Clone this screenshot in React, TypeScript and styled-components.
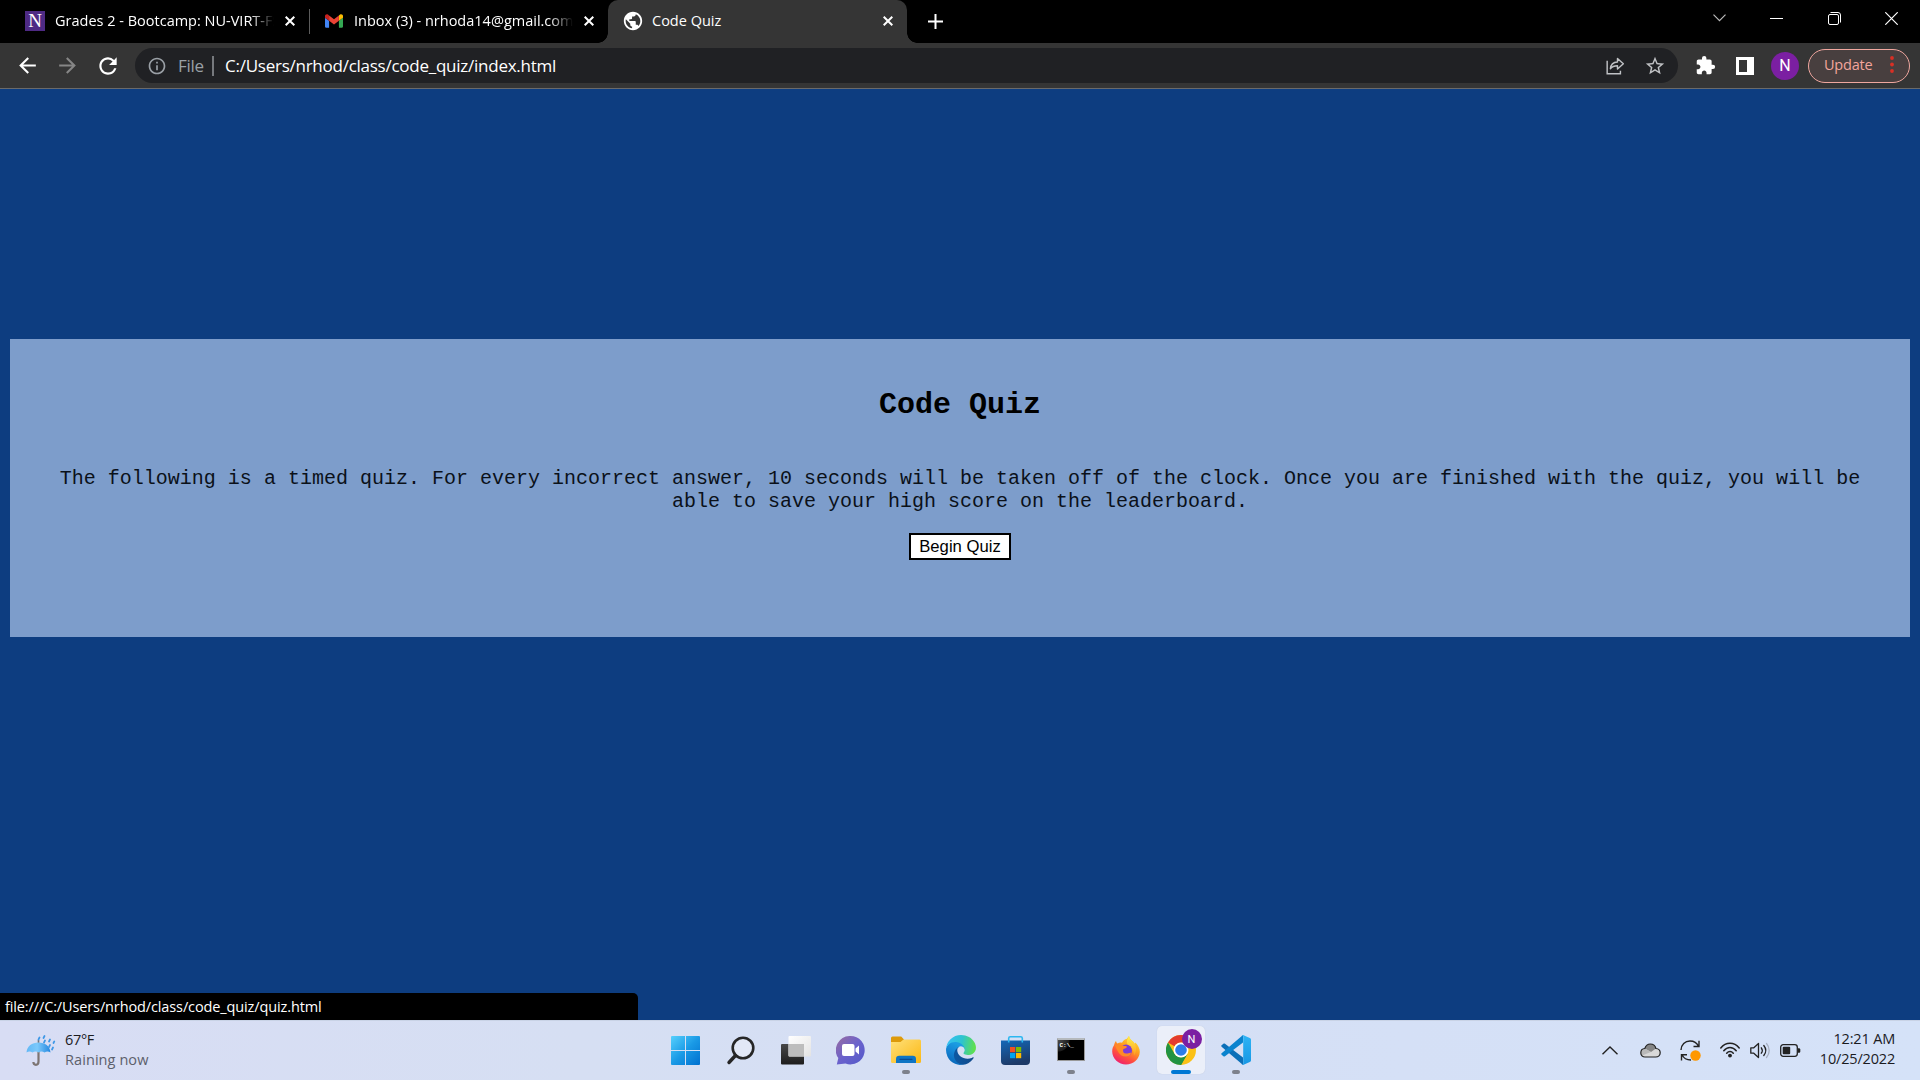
import React from "react";
import styled, { createGlobalStyle, css } from "styled-components";
import { MdArrowBack, MdArrowForward, MdRefresh, MdInfoOutline, MdStarOutline, MdExtension, MdPublic } from "react-icons/md";

const GlobalStyle = createGlobalStyle`
  * { box-sizing: border-box; }
  html, body { margin: 0; padding: 0; overflow: hidden; }
  body { font-family: "Open Sans", "Noto Sans", sans-serif; }
  svg { display: block; flex: none; }
`;

const Screen = styled.div`
  width: 1920px;
  height: 1080px;
  display: flex;
  flex-direction: column;
  background: #0d3d80;
`;

/* ---------- tab strip ---------- */
const TabStrip = styled.header`
  height: 43px;
  flex: none;
  display: flex;
  background: #000;
  color: #fff;
`;

const Tab = styled.div<{ $width: number; $active?: boolean; $left: number }>`
  position: relative;
  width: ${(p) => p.$width}px;
  height: 43px;
  flex: none;
  display: flex;
  align-items: center;
  padding: 0 14px 1px ${(p) => p.$left}px;
  ${(p) =>
    p.$active &&
    css`
      background: #353535;
      border-radius: 10px 10px 0 0;
      &::before,
      &::after {
        content: "";
        position: absolute;
        bottom: 0;
        width: 10px;
        height: 10px;
      }
      &::before {
        left: -10px;
        background: radial-gradient(circle at 0 0, transparent 9.5px, #353535 10px);
      }
      &::after {
        right: -10px;
        background: radial-gradient(circle at 100% 0, transparent 9.5px, #353535 10px);
      }
    `}
`;

const TabTitle = styled.span<{ $gap: number; $fade?: boolean }>`
  flex: 1;
  margin: 0 11px 0 ${(p) => p.$gap}px;
  overflow: hidden;
  white-space: nowrap;
  font-size: 14.5px;
  line-height: 20px;
  ${(p) => p.$fade && css`mask-image: linear-gradient(to right, #000 calc(100% - 24px), transparent);`}
`;

const TabDivider = styled.i`
  width: 1px;
  height: 25px;
  margin-top: 9px;
  flex: none;
  background: #5c5c5c;
`;

const NewTab = styled.div`
  width: 56px;
  display: flex;
  align-items: center;
  justify-content: center;
  padding-bottom: 1px;
`;

const WindowControls = styled.div`
  margin-left: auto;
  display: flex;
  height: 36px;
`;

const WindowControl = styled.div`
  width: 57.3px;
  display: flex;
  align-items: center;
  justify-content: center;
`;

/* ---------- toolbar ---------- */
const Toolbar = styled.nav`
  height: 46px;
  flex: none;
  display: flex;
  align-items: center;
  background: #353535;
  border-bottom: 1px solid #6a6a6a;
  color: #fff;
`;

const NavButton = styled.span<{ $dim?: boolean }>`
  width: 40.5px;
  display: flex;
  justify-content: center;
  color: ${(p) => (p.$dim ? "#868686" : "#fff")};
`;

const NavGroup = styled.div`
  width: 135px;
  padding-left: 7px;
  display: flex;
`;

const AddressBar = styled.div`
  width: 1543px;
  height: 35px;
  border-radius: 18px;
  background: #202124;
  display: flex;
  align-items: center;
  padding: 0 12px 0 12px;
  color: #9aa0a6;
`;

const Scheme = styled.span`
  margin-left: 11px;
  width: 34px;
  font-size: 17px;
  line-height: 22px;
  letter-spacing: -0.3px;
  color: #9aa0a6;
`;

const SchemeDivider = styled.i`
  width: 2px;
  height: 20px;
  background: #76797d;
`;

const Url = styled.span`
  margin-left: 11px;
  flex: 1;
  font-size: 17px;
  line-height: 22px;
  letter-spacing: -0.25px;
  color: #fff;
`;

const AddressActions = styled.div`
  display: flex;
  align-items: center;
  gap: 19px;
  color: #c0c2c5;
`;

const Extensions = styled.div`
  width: 130px;
  display: flex;
  align-items: center;
  padding-left: 17px;
`;

const SidePanelIcon = styled.i`
  width: 18px;
  height: 18px;
  margin-left: 20px;
  border: 3px solid #fff;
  border-right-width: 7px;
`;

const Avatar = styled.span<{ $size: number; $fontSize: number }>`
  width: ${(p) => p.$size}px;
  height: ${(p) => p.$size}px;
  border-radius: 50%;
  flex: none;
  display: flex;
  align-items: center;
  justify-content: center;
  background: #7b1fa2;
  color: #fff;
  font-family: Roboto, sans-serif;
  font-size: ${(p) => p.$fontSize}px;
  line-height: 1;
`;

const ProfileSlot = styled.div`
  margin-left: 17px;
`;

const UpdateButton = styled.button`
  width: 102px;
  height: 34px;
  padding: 0 15px 2px;
  display: flex;
  align-items: center;
  justify-content: space-between;
  border: 1px solid #f0a79f;
  border-radius: 17px;
  background: #483f3f;
  color: #f3a59c;
  font-family: inherit;
  font-size: 14.5px;
  letter-spacing: -0.2px;
`;

/* ---------- page ---------- */
const Page = styled.main`
  flex: 1;
  display: flex;
  flex-direction: column;
  padding: 250px 10px 0;
  font-family: "Liberation Mono", monospace;
  color: #000;
`;

const QuizPanel = styled.section`
  height: 298px;
  flex: none;
  padding: 49px 40px 0;
  display: flex;
  flex-direction: column;
  align-items: center;
  background: #7d9dcb;
  text-align: center;
`;

const QuizTitle = styled.h1`
  margin: 0 0 45px;
  font-size: 30px;
  line-height: 34px;
`;

const QuizText = styled.p`
  margin: 0 0 20px;
  font-size: 20px;
  line-height: 23px;
  color: #0b1119;
`;

const BeginButton = styled.button`
  width: 102px;
  height: 27px;
  padding: 0;
  border: 2px solid #000;
  background: #fff;
  color: #000;
  font: 16.67px "Liberation Sans", sans-serif;
`;

const StatusBubble = styled.div`
  width: 638px;
  height: 27px;
  margin: auto 0 0 -10px;
  padding-left: 5px;
  border-radius: 0 5px 0 0;
  background: #000;
  color: #fff;
  font: 14.5px/27px "Open Sans", "Noto Sans", sans-serif;
  letter-spacing: -0.12px;
`;

/* ---------- taskbar ---------- */
const Taskbar = styled.footer`
  height: 60px;
  flex: none;
  display: flex;
  align-items: center;
  box-shadow: inset 0 1px 0 #c9d3e6;
  background: linear-gradient(90deg, #d8ddf4 0%, #d6dff3 30%, #d5dff5 60%, #d5e2f8 100%);
  color: #1b1b1f;
`;

const Weather = styled.div`
  width: 658px;
  padding-left: 26px;
  display: flex;
  align-items: center;
`;

const Lines = styled.div<{ $align: "left" | "right" }>`
  display: flex;
  flex-direction: column;
  text-align: ${(p) => p.$align};
  font-size: 14.5px;
  line-height: 20px;
`;

const WeatherText = styled(Lines)`
  margin-left: 9px;
`;

const Muted = styled.span`
  color: #5c606b;
  letter-spacing: 0.08px;
`;

const Tight = styled.span`
  letter-spacing: -0.35px;
`;

const Apps = styled.div`
  display: flex;
`;

const AppSlot = styled.div`
  width: 55px;
  display: flex;
  justify-content: center;
`;

const AppTile = styled.div<{ $state?: "open" | "focused" }>`
  position: relative;
  width: 48px;
  height: 48px;
  border-radius: 5px;
  display: flex;
  align-items: center;
  justify-content: center;
  ${(p) => p.$state === "focused" && css`background: #ebeff9; box-shadow: 0 0 1px #b9c3d8;`}
  ${(p) =>
    p.$state &&
    css`
      &::after {
        content: "";
        position: absolute;
        bottom: 0;
        left: 50%;
        width: ${p.$state === "focused" ? 20 : 8}px;
        height: 4px;
        border-radius: 2px;
        transform: translateX(-50%);
        background: ${p.$state === "focused" ? "#0078d4" : "#7d818c"};
      }
    `}
`;

const Badge = styled.div`
  position: absolute;
  top: 3px;
  right: 3px;
`;

const Tray = styled.div`
  flex: 1;
  display: flex;
  align-items: center;
  justify-content: flex-end;
  padding-right: 25px;
`;

const TrayIcon = styled.span<{ $gap: number }>`
  margin-right: ${(p) => p.$gap}px;
`;

const Clock = styled(Lines)`
  width: 80px;
  margin-top: -2px;
`;

const ClockLine = styled.span`
  letter-spacing: -0.18px;
`;

/* ---------- drawings ---------- */
const CloseGlyph = () => (
  <svg width="10" height="10" viewBox="0 0 10 10" stroke="#fff" strokeWidth="2">
    <path d="M.7.7l8.6 8.6M9.3.7L.7 9.3" />
  </svg>
);

const Crest = styled.span`
  width: 20px;
  height: 20px;
  flex: none;
  background: #4e2a84;
  color: #fff;
  font: 19px/20px "Liberation Serif", serif;
  text-align: center;
`;

const GmailLogo = () => (
  <svg width="18" height="14" viewBox="52 42 88 66">
    <path fill="#4285f4" d="M58 108h14V74L52 59v43c0 3.32 2.69 6 6 6" />
    <path fill="#34a853" d="M120 108h14c3.32 0 6-2.69 6-6V59l-20 15" />
    <path fill="#fbbc04" d="M120 48v26l20-15v-8c0-7.42-8.47-11.65-14.4-7.2" />
    <path fill="#ea4335" d="M72 74V48l24 18 24-18v26L96 92" />
    <path fill="#c5221f" d="M52 51v8l20 15V48l-5.6-4.2c-5.94-4.45-14.4-.22-14.4 7.2" />
  </svg>
);

const ShareGlyph = () => (
  <svg width="19" height="18" viewBox="0 0 20 19" fill="none" stroke="currentColor" strokeWidth="1.5">
    <path d="M1.200 4v13.700h14V14.500" />
    <path d="M4.600 12.400c.4-4.600 3-7 7.500-7.200V1.600l6.200 5.600-6.200 5.400V9.300c-3.600 0-5.800.9-7.500 3.100z" strokeLinejoin="round" />
  </svg>
);

const Umbrella = () => (
  <svg width="30" height="31" viewBox="0 0 30 31">
    <defs>
      <linearGradient id="canopy"><stop stopColor="#62b8f6" /><stop offset=".45" stopColor="#7cc9fb" /><stop offset="1" stopColor="#2287e0" /></linearGradient>
    </defs>
    <path d="M12.500 14v12.500c0 2.600-1 3.300-2.600 3.300-1.700 0-2.500-1-2.500-2.800" fill="none" stroke="#7c7472" strokeWidth="2.200" />
    <path d="M12.500 5v4" stroke="#7c7472" strokeWidth="1.600" />
    <path d="M.5 17.500C1 11 6 7.500 12.500 7.500S24 11 24.500 17.500c-2-1.200-4-1.200-6 0-2-1.200-4-1.200-6 0-2-1.200-4-1.200-6 0-2-1.200-4-1.200-6 0z" fill="url(#canopy)" />
    <path d="M12.500 4.500l1-2M17.500 3l1-2M18 7.500l1-2M23 6.500l1-2M23 12l1-2M27.500 8l.8-1.600M26 14.500l1-2" stroke="#3d97e6" strokeWidth="1.700" strokeLinecap="round" />
  </svg>
);

const StartLogo = () => (
  <svg width="29" height="29" viewBox="0 0 29 29">
    <defs>
      <linearGradient id="win" x2="1" y2="1" gradientUnits="objectBoundingBox"><stop stopColor="#56d0fd" /><stop offset=".5" stopColor="#1a9ae6" /><stop offset="1" stopColor="#0070cf" /></linearGradient>
    </defs>
    <path fill="url(#win)" d="M1 0h13v14H0V1a1 1 0 011-1zM15 0h13a1 1 0 011 1v13H15zM0 15h14v14H1a1 1 0 01-1-1zM15 15h14v13a1 1 0 01-1 1H15z" />
  </svg>
);

const SearchLogo = () => (
  <svg width="29" height="29" viewBox="0 0 29 29" fill="none" stroke="#262626">
    <circle cx="17" cy="12" r="10.300" strokeWidth="2.600" fill="#e2e8f6" />
    <path d="M9.500 19.500L3 26.500" strokeWidth="3.400" strokeLinecap="round" />
  </svg>
);

const TaskViewLogo = () => (
  <svg width="30" height="29" viewBox="0 0 30 29">
    <defs>
      <linearGradient id="tvd" x2="0" y2="1"><stop stopColor="#484848" /><stop offset="1" stopColor="#1d1d1d" /></linearGradient>
      <linearGradient id="tvl" x2="1" y2="1"><stop stopColor="#fff" /><stop offset="1" stopColor="#e3e3e3" /></linearGradient>
    </defs>
    <rect y="8" width="23" height="20.500" rx="1" fill="url(#tvd)" />
    <rect x="7.500" y="0" width="22.500" height="20.500" rx="1" fill="url(#tvl)" />
    <path d="M7.500 8H23v12.500H8.500a1 1 0 01-1-1z" fill="#bdbdbd" />
  </svg>
);

const ChatLogo = () => (
  <svg width="29" height="29" viewBox="0 0 29 29">
    <defs>
      <linearGradient id="chat" x1="0" y1="0" x2="1" y2="1"><stop stopColor="#9a6c9f" /><stop offset=".5" stopColor="#6b62cc" /><stop offset="1" stopColor="#5359c9" /></linearGradient>
    </defs>
    <path d="M14.500 0a14.200 14.200 0 11-5 27.500L.8 28.400l1.500-6.300A14.200 14.200 0 0114.500 0z" fill="url(#chat)" />
    <rect x="6" y="8" width="12.500" height="12" rx="2" fill="#fff" />
    <path d="M19.500 12.500l3.500-3v9l-3.500-3z" fill="#fff" />
  </svg>
);

const ExplorerLogo = () => (
  <svg width="30" height="28" viewBox="0 0 30 28">
    <defs>
      <linearGradient id="folder" x2="1" y2="1"><stop stopColor="#ffe07a" /><stop offset="1" stopColor="#fbb813" /></linearGradient>
    </defs>
    <path d="M0 2a1.500 1.500 0 011.500-1.500h8.700L13 3.500V10H0z" fill="#dd9a0b" />
    <path d="M0 6h9.500l3-2.500h16A1.500 1.500 0 0130 5v20.500a1.500 1.500 0 01-1.500 1.500h-27A1.500 1.500 0 010 25.500z" fill="url(#folder)" />
    <path d="M5 27v-4a3.300 3.300 0 013.300-3.300h13.400A3.300 3.300 0 0125 23v4z" fill="#0f75c4" />
    <path d="M9 23.300h12" stroke="#0a4c94" strokeWidth="1.200" strokeLinecap="round" />
  </svg>
);

const EdgeLogo = () => (
  <svg width="30" height="30" viewBox="4.500 4.500 256.500 256.500">
    <defs>
      <linearGradient id="e1" x1="63" y1="178" x2="241" y2="178" gradientUnits="userSpaceOnUse"><stop stopColor="#0c59a4" /><stop offset="1" stopColor="#114a8b" /></linearGradient>
      <linearGradient id="e2" x1="120" y1="90" x2="50" y2="230" gradientUnits="userSpaceOnUse"><stop stopColor="#1b9de2" /><stop offset=".5" stopColor="#1484d4" /><stop offset="1" stopColor="#0a6cbd" /></linearGradient>
      <linearGradient id="e3" x1="20" y1="70" x2="250" y2="110" gradientUnits="userSpaceOnUse"><stop stopColor="#35c1f1" /><stop offset=".5" stopColor="#2ec3cf" /><stop offset="1" stopColor="#5fe04e" /></linearGradient>
    </defs>
    <path fill="url(#e1)" d="M235.680 195.460a93.730 93.730 0 01-10.540 4.710 101.870 101.870 0 01-35.900 6.460c-47.320 0-88.540-32.550-88.540-74.320A31.480 31.480 0 01117.130 105c-42.800 1.800-53.800 46.400-53.800 72.530 0 73.880 68.090 81.370 82.760 81.370 7.910 0 19.840-2.300 27-4.560l1.310-.44a128.340 128.340 0 0066.600-52.800 4 4 0 00-5.320-5.640z" />
    <path fill="url(#e2)" d="M110.340 246.340A79.200 79.200 0 0187.600 225a80.720 80.720 0 0129.530-120c3.120-1.470 8.450-4.130 15.540-4a32.350 32.350 0 0125.690 13 31.880 31.880 0 016.360 18.660c0-.21 24.460-79.600-80-79.600-43.900 0-80 41.660-80 78.210a130.150 130.150 0 0012.110 56 128 128 0 00156.380 67.110 75.550 75.550 0 01-62.780-8z" />
    <path fill="url(#e3)" d="M156.940 153.780c-.81 1.050-3.300 2.500-3.300 5.660 0 2.610 1.700 5.120 4.720 7.230 14.380 10 41.490 8.680 41.560 8.680a59.560 59.560 0 0030.270-8.350 61.380 61.380 0 0030.430-52.880c.26-22.410-8-37.310-11.340-43.910C228.090 28.760 182.350 4.630 132.610 4.630a128 128 0 00-128 126.200c.48-36.540 36.800-66.050 80-66.050 3.500 0 23.460.34 42 10.070 16.340 8.580 24.900 18.940 30.850 29.210 6.180 10.670 7.280 24.150 7.280 29.520s-2.740 13.330-7.800 20.200z" />
  </svg>
);

const StoreLogo = () => (
  <svg width="29" height="29" viewBox="0 0 29 29">
    <defs>
      <linearGradient id="store" x2=".3" y2="1"><stop stopColor="#1468b8" /><stop offset="1" stopColor="#1d3a68" /></linearGradient>
    </defs>
    <path d="M0 4.500h29V25a4 4 0 01-4 4H4a4 4 0 01-4-4z" fill="url(#store)" />
    <path d="M7.700 6.500V2.200A1.500 1.500 0 019.200.8h10.600a1.500 1.500 0 011.500 1.400v4.300" fill="none" stroke="#2cb7f0" strokeWidth="1.600" />
    <path fill="#f25022" d="M9 11h5.200v5.200H9z" />
    <path fill="#7fba00" d="M15 11h5.200v5.200H15z" />
    <path fill="#00a4ef" d="M9 17h5.200v5.200H9z" />
    <path fill="#ffb900" d="M15 17h5.200v5.200H15z" />
  </svg>
);

const Console = styled.div`
  width: 28px;
  height: 23px;
  margin-top: -2px;
  padding: 2px 2px 0;
  border: 1px solid #9a9a9a;
  border-top: 2px solid #b5b9bd;
  background: radial-gradient(circle at 0 0, #4d4d4d 0, #1c1c1c 11px, #000 12px);
  color: #fff;
  font: bold 6px/7px "Liberation Mono", monospace;
`;

const FirefoxLogo = () => (
  <svg width="28" height="29" viewBox="0 0 28 29">
    <defs>
      <linearGradient id="ff" x1=".8" y1="0" x2=".25" y2="1"><stop stopColor="#ffe53c" /><stop offset=".4" stopColor="#ff9f1e" /><stop offset=".7" stopColor="#ff4f3f" /><stop offset="1" stopColor="#ec1b74" /></linearGradient>
      <linearGradient id="ffy" x2="0" y2="1"><stop stopColor="#fff14a" /><stop offset="1" stopColor="#ff9e22" /></linearGradient>
    </defs>
    <path d="M4 5c.2 1 .7 2 1.500 2.600C7 6.500 8.500 6.400 10 6.800 11.500 4 13 3.200 14.500 3L17 0c.5 3 2.500 4 4.500 6 .6.700 1 1.300 1.200 2l.6-1.500C26 9 28 12.500 27.800 16c-.5 7.500-6.500 12.500-13.800 12.500S.2 22.500.2 15.500c0-3 .8-4.500 1.800-6.200C2.500 7.500 3 6 4 5z" fill="url(#ff)" />
    <path d="M17 0c.5 3 2.500 4 4.500 6 3 3.500 3.800 9 .5 13.500 0-5-2-8-5-9.500-3-2-2.500-6.500 0-10z" fill="url(#ffy)" />
    <circle cx="14" cy="14.500" r="6" fill="#7c3ad8" />
    <path d="M3 9.500c3-1.500 6-.7 8.300.3 2 .2 3.700.3 3.700 1.200s-2.500 1.500-3.800 2.200c-.7 3 .8 4.500 3.300 4.300 1.800 0 3-1.300 4.500-.7 0 2.500-3 4.200-6 3.800C7.500 20 5.500 15 3 9.500z" fill="#ff8a26" />
  </svg>
);

const ChromeLogo = () => (
  <svg width="30" height="30" viewBox="-24 -24 48 48">
    <circle r="24" fill="#fbc116" />
    <path d="M-20.785-12A24 24 0 0120.785-12H0A12 12 0 00-10.392-6z" fill="#e33b2e" />
    <path d="M-20.785-12A24 24 0 000 24L10.392 6A12 12 0 01-10.392 6z" fill="#229342" />
    <path d="M-10.392 6A12 12 0 00 10.392 6L0 24-20.785-12z" fill="#229342" />
    <circle r="12" fill="#fff" />
    <circle r="9.300" fill="#2b7de9" />
  </svg>
);

const CodeLogo = () => (
  <svg width="30" height="30" viewBox="0 0 30 30">
    <defs>
      <linearGradient id="vs" x2="0" y2="1"><stop stopColor="#2fb4f5" /><stop offset="1" stopColor="#1797e4" /></linearGradient>
    </defs>
    <path d="M.6 10.300l1.800-1.500c.5-.4 1-.4 1.600 0L22 22.500V30L.6 11.700c-.5-.4-.5-1 0-1.400z" fill="#0b6fb8" />
    <path d="M.6 19.700l1.800 1.500c.5.400 1 .4 1.600 0L22 7.500V0L.6 18.300c-.5.400-.5 1 0 1.400z" fill="#0a83ce" />
    <path d="M22 0l6.800 3c.8.300 1.200 1 1.200 1.800v20.400c0 .8-.4 1.500-1.200 1.800L22 30c-.7.200-1.300 0-1.700-.4 1 .6 1.900 0 1.900-1.100v-27c0-1.100-.9-1.700-1.900-1.100.4-.4 1-.6 1.700-.4z" fill="url(#vs)" />
  </svg>
);

const TrayChevron = () => (
  <svg width="16" height="9" viewBox="0 0 16 9" fill="none" stroke="#222" strokeWidth="1.400"><path d="M.5 8.300L8 1l7.500 7.300" /></svg>
);

const CloudGlyph = () => (
  <svg width="21" height="15" viewBox="0 0 21 15">
    <path d="M4.800 5.500C5.800 2.500 8 1 10.300 1c3 0 5 1.800 5.600 4.500 2.500.2 4.300 1.800 4.300 4.200 0 2.500-1.900 4.300-4.400 4.300H5C2.500 14 .8 12.200.8 9.900c0-2.400 1.700-4.300 4-4.400z" fill="#d9d9d9" />
    <path d="M4.800 5.500C5.800 2.500 8 1 10.300 1c3 0 5 1.800 5.600 4.500L11 9 4.800 5.500z" fill="#858585" />
    <path d="M4.800 5.500L11 9l-9 3.500C-.5 9 1.500 5.500 4.800 5.500z" fill="#b9b9b9" />
    <path d="M4.800 5.500C5.800 2.500 8 1 10.300 1c3 0 5 1.800 5.600 4.500 2.500.2 4.300 1.800 4.300 4.200 0 2.500-1.900 4.300-4.400 4.300H5C2.500 14 .8 12.200.8 9.900c0-2.400 1.700-4.300 4-4.400z" fill="none" stroke="#222" strokeWidth="1.200" />
  </svg>
);

const SyncGlyph = () => (
  <svg width="21" height="21" viewBox="0 0 21 21" fill="none" stroke="#222" strokeWidth="1.400">
    <path d="M1 10C1.200 4.500 5 1 10 1c3.800 0 7 2 8.500 5.300M19 .8v5.700h-5.500M11 20c-4 0-7.500-2-9-5.300M1.500 20.500v-5.700H7" />
    <circle cx="15.500" cy="15.500" r="5.200" fill="#ff9800" stroke="none" />
  </svg>
);

const WifiGlyph = () => (
  <svg width="20" height="16" viewBox="0 0 20 16" fill="none" stroke="#222" strokeWidth="1.500" strokeLinecap="round">
    <path d="M.8 6C5.800-.2 14.200-.2 19.200 6M3.800 8.700c3.500-4.300 8.900-4.300 12.400 0M6.700 11.300c2-2.300 4.600-2.300 6.600 0" />
    <circle cx="10" cy="13.600" r="1.200" fill="#222" />
  </svg>
);

const SpeakerGlyph = () => (
  <svg width="21" height="17" viewBox="0 0 21 17" fill="none" stroke="#222" strokeWidth="1.300" strokeLinejoin="round" strokeLinecap="round">
    <path d="M.8 5.800h3L8.500 1.500v14L3.800 11.200h-3z" />
    <path d="M11.300 5.800c1.200 1.600 1.200 3.800 0 5.400M13.800 3.500c2.400 3 2.400 7 0 10" />
    <path d="M16.500 1.500c3.600 4 3.600 10 0 14" stroke="#a9b1c2" />
  </svg>
);

const BatteryGlyph = () => (
  <svg width="21" height="13" viewBox="0 0 21 13">
    <rect x=".7" y=".7" width="16.600" height="11.600" rx="2.500" fill="none" stroke="#222" strokeWidth="1.300" />
    <rect x="2.700" y="2.700" width="7.500" height="7.600" rx="1" fill="#222" />
    <path d="M18 4.300h.8c1 0 1.500.6 1.500 1.300v1.800c0 .7-.5 1.300-1.500 1.300H18z" fill="#222" />
  </svg>
);

const apps: { name: string; Icon: React.ComponentType; state?: "open" | "focused" }[] = [
  { name: "start", Icon: StartLogo },
  { name: "search", Icon: SearchLogo },
  { name: "taskview", Icon: TaskViewLogo },
  { name: "chat", Icon: ChatLogo },
  { name: "explorer", Icon: ExplorerLogo, state: "open" },
  { name: "edge", Icon: EdgeLogo },
  { name: "store", Icon: StoreLogo },
  { name: "console", Icon: () => <Console>C:\_</Console>, state: "open" },
  { name: "firefox", Icon: FirefoxLogo },
  { name: "chrome", Icon: ChromeLogo, state: "focused" },
  { name: "code", Icon: CodeLogo, state: "open" },
];

export default function App() {
  return (
    <Screen>
      <GlobalStyle />
      <TabStrip>
        <Tab $width={309} $left={25}>
          <Crest>N</Crest>
          <TabTitle $gap={10} $fade>Grades 2 - Bootcamp: NU-VIRT-FSF</TabTitle>
          <CloseGlyph />
        </Tab>
        <TabDivider />
        <Tab $width={298} $left={15}>
          <GmailLogo />
          <TabTitle $gap={11} $fade>Inbox (3) - nrhoda14@gmail.com</TabTitle>
          <CloseGlyph />
        </Tab>
        <Tab $width={299} $left={14} $active>
          <MdPublic size={22} />
          <TabTitle $gap={8}>Code Quiz</TabTitle>
          <CloseGlyph />
        </Tab>
        <NewTab>
          <svg width="15" height="15" viewBox="0 0 15 15" stroke="#fff" strokeWidth="2"><path d="M7.500 0v15M0 7.500h15" /></svg>
        </NewTab>
        <WindowControls>
          <WindowControl>
            <svg width="13" height="8" viewBox="0 0 13 8" fill="none" stroke="#bbb" strokeWidth="1.200"><path d="M.5.7l6 6 6-6" /></svg>
          </WindowControl>
          <WindowControl>
            <svg width="13" height="1" viewBox="0 0 13 1"><path d="M0 0h13v1H0z" fill="#fff" /></svg>
          </WindowControl>
          <WindowControl>
            <svg width="13" height="13" viewBox="0 0 13 13" fill="none" stroke="#fff"><rect x=".5" y="2.500" width="10" height="10" rx="1.500" /><path d="M2.500.5h7.500a2.500 2.500 0 012.500 2.500v7.500" /></svg>
          </WindowControl>
          <WindowControl>
            <svg width="13" height="13" viewBox="0 0 13 13" stroke="#fff" strokeWidth="1.200"><path d="M.3.3l12.400 12.400M12.700.3L.3 12.700" /></svg>
          </WindowControl>
        </WindowControls>
      </TabStrip>

      <Toolbar>
        <NavGroup>
          <NavButton><MdArrowBack size={25} /></NavButton>
          <NavButton $dim><MdArrowForward size={25} /></NavButton>
          <NavButton><MdRefresh size={26} /></NavButton>
        </NavGroup>
        <AddressBar>
          <MdInfoOutline size={20} />
          <Scheme>File</Scheme>
          <SchemeDivider />
          <Url>C:/Users/nrhod/class/code_quiz/index.html</Url>
          <AddressActions>
            <ShareGlyph />
            <MdStarOutline size={22} />
          </AddressActions>
        </AddressBar>
        <Extensions>
          <MdExtension size={21} />
          <SidePanelIcon />
          <ProfileSlot><Avatar $size={28} $fontSize={16}>N</Avatar></ProfileSlot>
        </Extensions>
        <UpdateButton>
          Update
          <svg width="4" height="17" viewBox="0 0 4 17" fill="#d93025"><circle cx="2" cy="2" r="1.900" /><circle cx="2" cy="8.500" r="1.900" /><circle cx="2" cy="15" r="1.900" /></svg>
        </UpdateButton>
      </Toolbar>

      <Page>
        <QuizPanel>
          <QuizTitle>Code Quiz</QuizTitle>
          <QuizText>
            The following is a timed quiz. For every incorrect answer, 10 seconds will be taken off of the clock. Once you
            are finished with the quiz, you will be able to save your high score on the leaderboard.
          </QuizText>
          <BeginButton>Begin Quiz</BeginButton>
        </QuizPanel>
        <StatusBubble>file:///C:/Users/nrhod/class/code_quiz/quiz.html</StatusBubble>
      </Page>

      <Taskbar>
        <Weather>
          <Umbrella />
          <WeatherText $align="left">
            <Tight>67°F</Tight>
            <Muted>Raining now</Muted>
          </WeatherText>
        </Weather>
        <Apps>
          {apps.map(({ name, Icon, state }) => (
            <AppSlot key={name}>
              <AppTile $state={state}>
                <Icon />
                {state === "focused" && <Badge><Avatar $size={20} $fontSize={11}>N</Avatar></Badge>}
              </AppTile>
            </AppSlot>
          ))}
        </Apps>
        <Tray>
          <TrayIcon $gap={22}><TrayChevron /></TrayIcon>
          <TrayIcon $gap={19}><CloudGlyph /></TrayIcon>
          <TrayIcon $gap={19}><SyncGlyph /></TrayIcon>
          <TrayIcon $gap={10}><WifiGlyph /></TrayIcon>
          <TrayIcon $gap={9}><SpeakerGlyph /></TrayIcon>
          <TrayIcon $gap={14}><BatteryGlyph /></TrayIcon>
          <Clock $align="right">
            <ClockLine>12:21 AM</ClockLine>
            <ClockLine>10/25/2022</ClockLine>
          </Clock>
        </Tray>
      </Taskbar>
    </Screen>
  );
}
